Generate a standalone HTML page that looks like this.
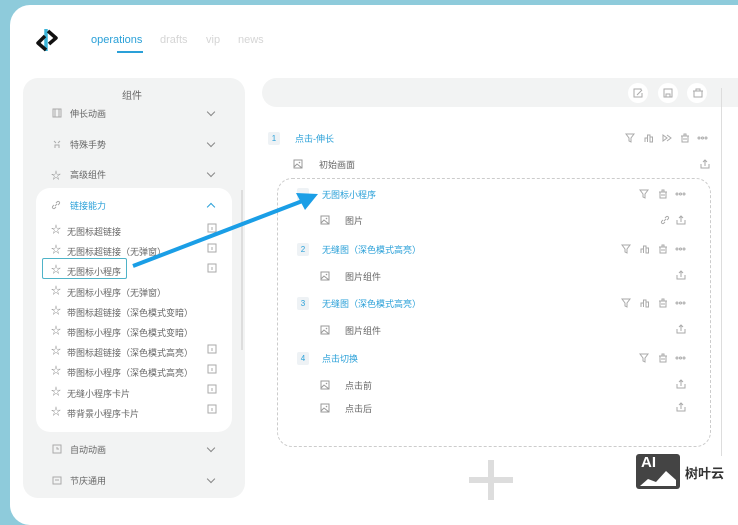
<!DOCTYPE html><html><head><meta charset="utf-8"><style>
*{margin:0;padding:0;box-sizing:border-box}
body{width:738px;height:500px;overflow:hidden;background:#8ecbdb;font-family:"Liberation Sans","Noto Sans CJK SC",sans-serif;position:relative}
.card{position:absolute;left:10px;top:5px;width:760px;height:520px;background:#fff;border-radius:20px}
.a{position:absolute;white-space:nowrap}
.t{font-size:9px;color:#666}
.b{font-size:9px;color:#2aa0d8}
.nav{font-size:11px;color:#d5d5d5}
svg{position:absolute}
.ic{stroke:#aaa;fill:none;stroke-width:1}
.chev{position:absolute;width:6px;height:6px;border-right:1.2px solid #888;border-bottom:1.2px solid #888;transform:rotate(45deg)}
.badge{position:absolute;width:12px;height:13px;background:#eef2f5;border-radius:2px;font-size:8px;color:#2aa0d8;text-align:center;line-height:13px}
.st{position:absolute;left:51px;font-size:10px;color:#888}
</style></head><body>
<svg width="0" height="0"><defs>
<g id="fil"><path d="M1 1 H9 L6 5 V9 L4 8 V5 Z" stroke="#aaa" fill="none"/></g>
<g id="bar"><path d="M1 9 V5 H3.5 V9 M3.5 9 V2 H6 V9 M6 9 V4 H8.5 V9 Z" stroke="#aaa" fill="none"/></g>
<g id="trs"><path d="M2 3 H8 V9 H2 Z M1 3 H9 M4 3 V1 H6 V3 M4 5 V7 M6 5 V7" stroke="#aaa" fill="none"/></g>
<g id="dot"><circle cx="2" cy="5" r="1" fill="none" stroke="#aaa"/><circle cx="5.5" cy="5" r="1" fill="none" stroke="#aaa"/><circle cx="9" cy="5" r="1" fill="none" stroke="#aaa"/></g>
<g id="ply"><path d="M1 2 L5 5 L1 8 Z M5 2 L9 5 L5 8" stroke="#aaa" fill="none"/></g>
<g id="shr"><path d="M1 5 V9 H9 V5 M5 7 V1 M3 3 L5 1 L7 3" stroke="#aaa" fill="none"/></g>
<g id="img"><rect x="1" y="1" width="8" height="8" stroke="#999" fill="none"/><path d="M1 8 L4 5 L9 9" stroke="#999" fill="none"/><circle cx="6.5" cy="3.5" r="0.8" fill="#999"/></g>
<g id="lnk"><path d="M4 6 L6 4 M3 5 L1.5 6.5 A1.5 1.5 0 0 0 3.5 8.5 L5 7 M5 3 L6.5 1.5 A1.5 1.5 0 0 1 8.5 3.5 L7 5" stroke="#aaa" fill="none"/></g>
</defs></svg>
<div class="card"></div>
<svg style="left:35px;top:26px" width="26" height="28" viewBox="0 0 26 28"><path d="M11 3 L11 25" stroke="#3ab4d8" stroke-width="3.5"/><path d="M13 5 L21 12 L14 18" stroke="#111" stroke-width="3.5" fill="none" stroke-linejoin="round"/><path d="M10 10 L3 17 L11 24" stroke="#111" stroke-width="3.5" fill="none" stroke-linejoin="round"/></svg>
<div class="a" style="left:91px;top:34px;font-size:11px;color:#2aa0d8">operations</div>
<div class="a" style="left:117px;top:51px;width:26px;height:1.5px;background:#2aa0d8"></div>
<div class="a nav" style="left:160px;top:34px">drafts</div>
<div class="a nav" style="left:206px;top:34px">vip</div>
<div class="a nav" style="left:238px;top:34px">news</div>

<div class="a" style="left:23px;top:78px;width:222px;height:420px;background:#f2f3f3;border-radius:15px"></div>
<div class="a" style="left:122px;top:87px;font-size:10px;color:#666">组件</div>
<div class="a" style="left:241px;top:190px;width:2px;height:160px;background:#ddd"></div>
<div class="a" style="left:36px;top:188px;width:196px;height:244px;background:#fff;border-radius:14px"></div>

<div class="a t" style="left:70px;top:107px">伸长动画</div><div class="chev" style="left:208px;top:109px"></div>
<svg style="left:52px;top:108px" width="10" height="10"><rect x="1" y="1" width="8" height="8" class="ic"/><path d="M3 1 V9 M7 1 V9" class="ic"/></svg>
<div class="a t" style="left:70px;top:138px">特殊手势</div><div class="chev" style="left:208px;top:140px"></div>
<svg style="left:52px;top:139px" width="10" height="10"><path d="M2 2 L4 4 M8 2 L6 4 M3 9 V6 H7 V9" class="ic"/></svg>
<div class="a t" style="left:70px;top:168px">高级组件</div><div class="chev" style="left:208px;top:170px"></div>
<div class="st" style="top:167px">☆</div>
<div class="a b" style="left:70px;top:199px">链接能力</div>
<div class="chev" style="left:208px;top:204px;border-color:#2aa0d8;transform:rotate(-135deg)"></div>
<svg style="left:51px;top:200px" width="10" height="10"><use href="#lnk"/></svg>

<div class="a" style="left:67px;top:222px;line-height:20.2px;font-size:9px;color:#666">
无图标超链接<br>无图标超链接（无弹窗）<br>无图标小程序<br>无图标小程序（无弹窗）<br>带图标超链接（深色模式变暗）<br>带图标小程序（深色模式变暗）<br>带图标超链接（深色模式高亮）<br>带图标小程序（深色模式高亮）<br>无缝小程序卡片<br>带背景小程序卡片</div>
<div class="a" style="left:51px;top:221px;line-height:20.2px;font-size:10px;color:#888">☆<br>☆<br>☆<br>☆<br>☆<br>☆<br>☆<br>☆<br>☆<br>☆</div>
<svg style="left:207px;top:223px" width="10" height="195"><g class="ic"><rect x="1" y="1" width="8" height="8"/><rect x="1" y="21" width="8" height="8"/><rect x="1" y="41" width="8" height="8"/><rect x="1" y="122" width="8" height="8"/><rect x="1" y="142" width="8" height="8"/><rect x="1" y="162" width="8" height="8"/><rect x="1" y="182" width="8" height="8"/><path d="M5 4 V7 M5 24 V27 M5 44 V47 M5 125 V128 M5 145 V148 M5 165 V168 M5 185 V188"/></g></svg>
<div class="a" style="left:42px;top:258px;width:85px;height:21px;border:1.5px solid #4fb3c8;border-radius:2px"></div>

<div class="a t" style="left:70px;top:443px">自动动画</div><div class="chev" style="left:208px;top:445px"></div>
<svg style="left:52px;top:444px" width="10" height="10"><rect x="1" y="1" width="8" height="8" class="ic"/><path d="M5 3 V5 H7" class="ic"/></svg>
<div class="a t" style="left:70px;top:474px">节庆通用</div><div class="chev" style="left:208px;top:476px"></div>
<svg style="left:52px;top:475px" width="10" height="10"><rect x="1" y="2" width="8" height="7" class="ic"/><path d="M3 5 H7" class="ic"/></svg>

<div class="a" style="left:262px;top:78px;width:490px;height:29px;background:#f2f3f3;border-radius:15px"></div>
<div class="a" style="left:628px;top:83px;width:20px;height:20px;background:#fff;border-radius:50%"></div>
<div class="a" style="left:658px;top:83px;width:20px;height:20px;background:#fff;border-radius:50%"></div>
<div class="a" style="left:687px;top:83px;width:20px;height:20px;background:#fff;border-radius:50%"></div>
<svg style="left:628px;top:83px" width="80" height="20"><g class="ic"><path d="M13 7 V6 H6 V14 H14 V10 M9 12 L14 7"/><rect x="36" y="6" width="8" height="8"/><path d="M38 14 V11 H42 V14"/><path d="M66 8 H74 V14 H66 Z M65 8 H75 M68 8 V6 H72 V8"/></g></svg>
<div class="a" style="left:721px;top:88px;width:1px;height:368px;background:#ddd"></div>

<div class="badge" style="left:268px;top:132px">1</div>
<div class="a b" style="left:295px;top:132px">点击-伸长</div>
<svg style="left:625px;top:133px" width="90" height="10"><use href="#fil" x="0"/><use href="#bar" x="19"/><use href="#ply" x="37"/><use href="#trs" x="55"/><use href="#dot" x="72"/></svg>
<svg style="left:293px;top:159px" width="10" height="10"><use href="#img"/></svg>
<div class="a t" style="left:319px;top:158px">初始画面</div>
<svg style="left:700px;top:159px" width="10" height="10"><use href="#shr"/></svg>

<div class="a" style="left:277px;top:178px;width:434px;height:269px;border:1px dashed #ccc;border-radius:15px"></div>

<div class="badge" style="left:297px;top:188px"></div>
<div class="a b" style="left:322px;top:188px">无图标小程序</div>
<svg style="left:639px;top:189px" width="50" height="10"><use href="#fil" x="0"/><use href="#trs" x="19"/><use href="#dot" x="36"/></svg>
<svg style="left:320px;top:215px" width="10" height="10"><use href="#img"/></svg>
<div class="a t" style="left:345px;top:214px">图片</div>
<svg style="left:660px;top:215px" width="30" height="10"><use href="#lnk" x="0"/><use href="#shr" x="16"/></svg>

<div class="badge" style="left:297px;top:243px">2</div>
<div class="a b" style="left:322px;top:243px">无缝图（深色模式高亮）</div>
<svg style="left:621px;top:244px" width="70" height="10"><use href="#fil" x="0"/><use href="#bar" x="19"/><use href="#trs" x="37"/><use href="#dot" x="54"/></svg>
<svg style="left:320px;top:271px" width="10" height="10"><use href="#img"/></svg>
<div class="a t" style="left:345px;top:270px">图片组件</div>
<svg style="left:676px;top:270px" width="10" height="10"><use href="#shr"/></svg>

<div class="badge" style="left:297px;top:297px">3</div>
<div class="a b" style="left:322px;top:297px">无缝图（深色模式高亮）</div>
<svg style="left:621px;top:298px" width="70" height="10"><use href="#fil" x="0"/><use href="#bar" x="19"/><use href="#trs" x="37"/><use href="#dot" x="54"/></svg>
<svg style="left:320px;top:325px" width="10" height="10"><use href="#img"/></svg>
<div class="a t" style="left:345px;top:324px">图片组件</div>
<svg style="left:676px;top:324px" width="10" height="10"><use href="#shr"/></svg>

<div class="badge" style="left:297px;top:352px">4</div>
<div class="a b" style="left:322px;top:352px">点击切换</div>
<svg style="left:639px;top:353px" width="50" height="10"><use href="#fil" x="0"/><use href="#trs" x="19"/><use href="#dot" x="36"/></svg>
<svg style="left:320px;top:380px" width="10" height="10"><use href="#img"/></svg>
<div class="a t" style="left:345px;top:379px">点击前</div>
<svg style="left:676px;top:379px" width="10" height="10"><use href="#shr"/></svg>
<svg style="left:320px;top:403px" width="10" height="10"><use href="#img"/></svg>
<div class="a t" style="left:345px;top:402px">点击后</div>
<svg style="left:676px;top:402px" width="10" height="10"><use href="#shr"/></svg>

<div class="a" style="left:469px;top:477px;width:44px;height:6px;background:#ddd"></div>
<div class="a" style="left:488px;top:460px;width:6px;height:40px;background:#ddd"></div>

<svg style="left:0;top:0" width="738" height="500"><path d="M133 266 L305 200" stroke="#1a9ee6" stroke-width="4"/><path d="M318 194 L296 193 L305 210 Z" fill="#1a9ee6"/></svg>

<div class="a" style="left:636px;top:454px;width:44px;height:35px;background:#444;border-radius:3px"></div>
<div class="a" style="left:641px;top:454px;font-size:15px;font-weight:bold;color:#fff">AI</div>
<svg style="left:638px;top:466px" width="40" height="20"><path d="M2 20 L10 13 L18 16 L28 5 L38 14 L38 20 Z" fill="#fff"/></svg>
<div class="a" style="left:685px;top:463px;font-size:13px;font-weight:bold;color:#333">树叶云</div>
</body></html>
